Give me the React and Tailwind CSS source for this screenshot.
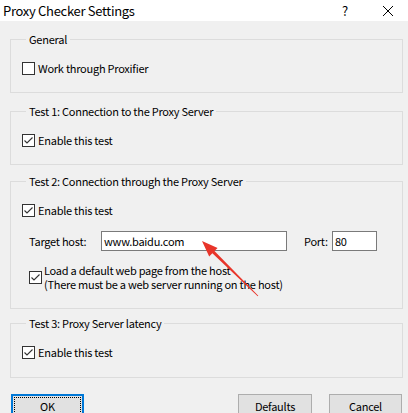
import React from "react";

const font = { fontFamily: '"Noto Sans CJK SC", "Noto Sans", sans-serif' };

function Box({ checked }) {
  return (
    <span className="w-[13px] h-[13px] border border-[#333333] bg-white flex items-center justify-center shrink-0">
      {checked && (
        <svg width="11" height="11" viewBox="0 0 11 11">
          <path d="M1.5 5.5 L4 8 L9.5 2.5" fill="none" stroke="#333" strokeWidth="1.1" />
        </svg>
      )}
    </span>
  );
}

function Check({ checked, children, className = "" }) {
  return (
    <div className={"flex items-center gap-[3px] h-[16px] leading-[16px] " + className}>
      <Box checked={checked} />
      <span>{children}</span>
    </div>
  );
}

function Group({ title, children, className = "", pb = "pb-[16px]" }) {
  return (
    <fieldset className={"border border-[#dcdcdc] pl-[11px] pr-0 pt-0 " + pb + " " + className}>
      <legend className="ml-[4px] px-[3px] leading-[16px] h-[16px]">{title}</legend>
      {children}
    </fieldset>
  );
}

export default function App() {
  return (
    <div
      className="w-[408px] h-[413px] overflow-hidden bg-[#f0f0f0] relative text-[11px] tracking-[-0.25px] text-black"
      style={font}
    >
      <div className="h-[21px] bg-white flex items-center">
        <span className="ml-[3px] text-[13px] tracking-[-0.3px] leading-[20px]">Proxy Checker Settings</span>
        <span className="ml-auto mr-[34px] text-[13px] leading-[20px]">?</span>
        <svg width="12" height="12" viewBox="0 0 12 12" className="mr-[14px]">
          <path d="M1 1 L11 11 M11 1 L1 11" stroke="#000" strokeWidth="1" />
        </svg>
      </div>

      <div className="pl-[10px] pr-[5px] flex flex-col">
        <Group title="General" className="mt-[10px]">
          <Check className="mt-[13px]">Work through Proxifier</Check>
        </Group>

        <Group title="Test 1: Connection to the Proxy Server" className="mt-[10px]">
          <Check checked className="mt-[13px]">Enable this test</Check>
        </Group>

        <Group title="Test 2: Connection through the Proxy Server" className="mt-[8px]" pb="pb-[17px]">
          <Check checked className="mt-[13px]">Enable this test</Check>
          <div className="flex items-center mt-[13px] pl-[7px]">
            <span className="w-[72px] leading-[16px]">Target host:</span>
            <div className="w-[186px] h-[20px] border border-[#7a7a7a] bg-white flex items-center pl-[2px] leading-[16px]">
              www.baidu.com
            </div>
            <span className="ml-[17px] w-[28px] leading-[16px]">Port:</span>
            <div className="w-[45px] h-[20px] border border-[#7a7a7a] bg-white flex items-center pl-[2px] leading-[16px]">
              80
            </div>
          </div>
          <div className="flex items-center gap-[2px] mt-[12px] pl-[7px]">
            <Box checked />
            <div className="leading-[14px]">
              <div>Load a default web page from the host</div>
              <div>(There must be a web server running on the host)</div>
            </div>
          </div>
        </Group>

        <Group title="Test 3: Proxy Server latency" className="mt-[6px]" pb="pb-[17px]">
          <Check checked className="mt-[13px]">Enable this test</Check>
        </Group>
      </div>

      <div className="flex mt-[16px] pl-[11px] pr-[6px]">
        <div className="w-[73px] h-[23px] border-2 border-[#0078d7] bg-[#e1e1e1] p-[1px]">
          <div className="w-full h-full border border-dotted border-black flex items-center justify-center leading-[16px]">
            OK
          </div>
        </div>
        <div className="ml-auto w-[74px] h-[23px] border border-[#adadad] bg-[#e1e1e1] flex items-center justify-center leading-[16px]">
          Defaults
        </div>
        <div className="ml-[17px] w-[73px] h-[23px] border border-[#adadad] bg-[#e1e1e1] flex items-center justify-center leading-[16px]">
          Cancel
        </div>
      </div>

      <svg
        className="absolute left-0 top-0 pointer-events-none"
        width="408"
        height="413"
        viewBox="0 0 408 413"
      >
        <polygon
          points="202,241 217.6,247.9 214.45,251.1 258.3,295.8 257.7,296.3 212.35,253.3 209.2,256.5"
          fill="#e8352a"
        />
      </svg>
    </div>
  );
}
